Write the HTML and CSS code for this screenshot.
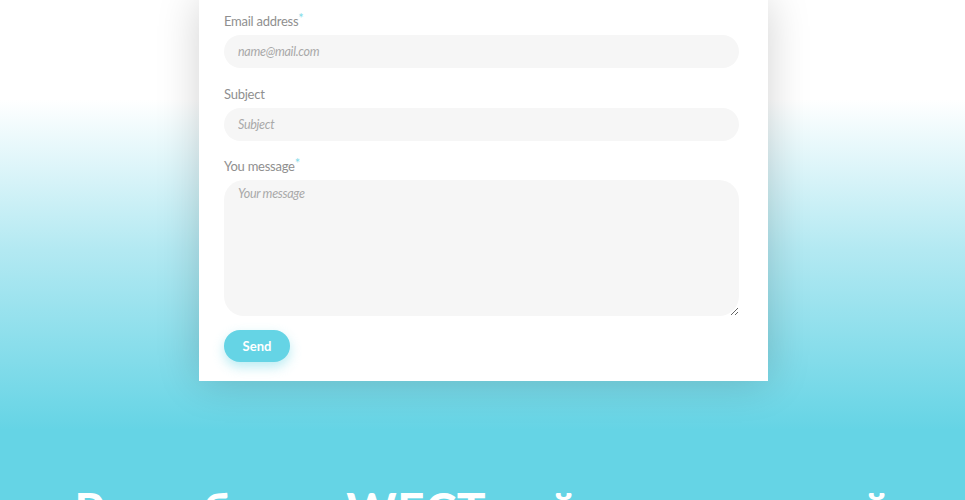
FILE: index.html
```html
<!DOCTYPE html>
<html lang="en">
<head>
<meta charset="utf-8">
<title>Contact</title>
<link rel="stylesheet" href="styles.css">
</head>
<body>
<div class="page">
  <form class="card">
    <div class="field">
      <label class="label">Email address<span class="req">*</span></label>
      <input class="input" type="text" placeholder="name@mail.com">
    </div>
    <div class="field">
      <label class="label">Subject</label>
      <input class="input" type="text" placeholder="Subject">
    </div>
    <div class="field last">
      <label class="label">You message<span class="req">*</span></label>
      <textarea class="textarea" placeholder="Your message"></textarea>
    </div>
    <button class="send" type="button">Send</button>
  </form>
  <h2 class="headline">Разработка WEСТ-сайтов компаний</h2>
</div>
</body>
</html>
```
FILE: styles.css
```css
* { box-sizing: border-box; }
html, body { margin: 0; padding: 0; }
body {
  font-family: Lato, "Noto Sans", sans-serif;
  background: #65d4e5;
  overflow: hidden;
}
.page {
  height: 500px;
  overflow: hidden;
  background: linear-gradient(to bottom, #ffffff 0px, #ffffff 100px, #b3e9f2 250px, #65d4e5 430px, #65d4e5 100%);
}
.card {
  width: 569px;
  margin-left: 199px;
  background: #fff;
  padding: 11px 29px 19px 25px;
  box-shadow: 0 0 40px rgba(0, 0, 0, 0.18);
  display: flex;
  flex-direction: column;
}
.field {
  display: flex;
  flex-direction: column;
  margin-bottom: 15.5px;
}
.field.last { margin-bottom: 14px; }
.label {
  font-size: 13px;
  letter-spacing: -0.25px;
  color: #8f8f8f;
  line-height: 20px;
  height: 20px;
  margin-bottom: 4px;
}
.req { color: #7fdbe9; font-size: 13px; vertical-align: top; line-height: 14px; }
.input, .textarea {
  width: 515px;
  border: none;
  outline: none;
  background: #f6f6f6;
  font-family: Lato, sans-serif;
  font-style: italic;
  font-size: 12.5px;
  letter-spacing: -0.3px;
  color: #555;
  padding: 0 14px;
}
.input {
  height: 33px;
  border-radius: 17px;
}
.textarea {
  height: 136px;
  border-radius: 20px;
  padding-top: 6px;
  resize: vertical;
}
.input::placeholder, .textarea::placeholder { color: #a9a9a9; }
.send {
  align-self: flex-start;
  width: 66px;
  height: 32px;
  border: none;
  border-radius: 16px;
  background: #65d4e5;
  color: #fff;
  font-family: Lato, sans-serif;
  font-weight: 700;
  font-size: 13px;
  box-shadow: 0 5px 12px rgba(101, 212, 229, 0.45);
}
.headline {
  margin: 99px 0 0;
  text-align: center;
  color: #fff;
  font-family: Lato, sans-serif;
  font-weight: 700;
  font-size: 48px;
  line-height: 60px;
  letter-spacing: 0.3px;
  white-space: nowrap;
}
```
